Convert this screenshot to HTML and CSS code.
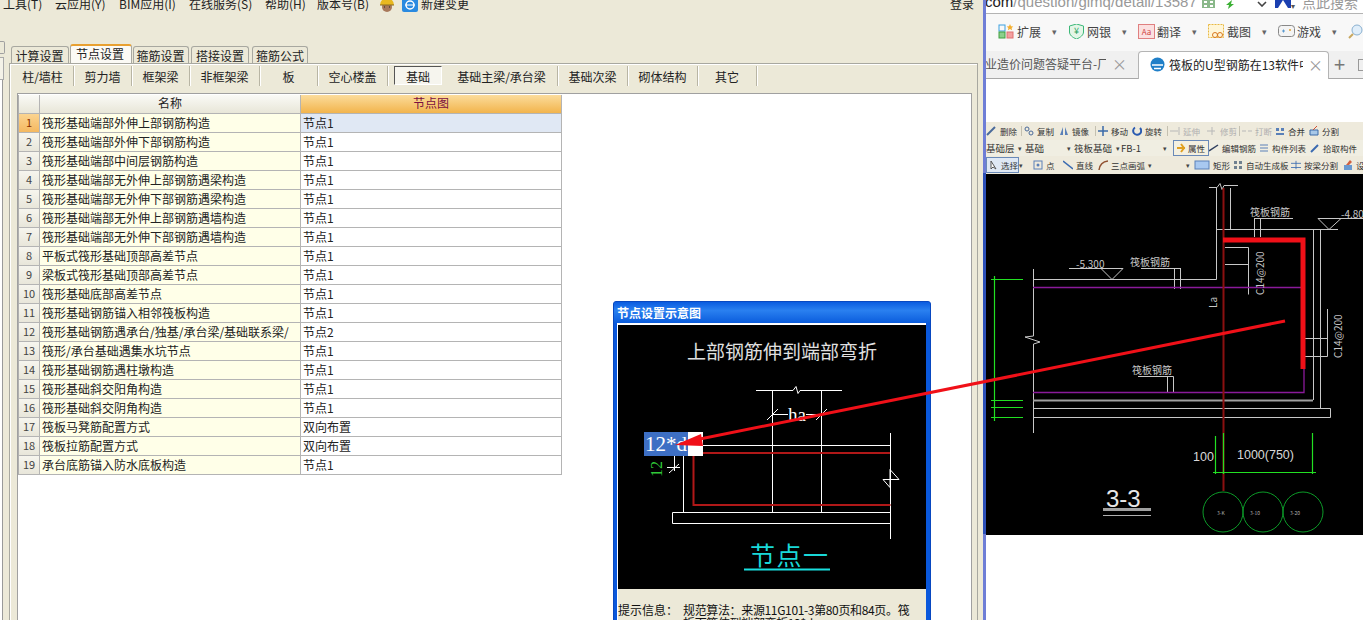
FILE: index.html
```html
<!DOCTYPE html>
<html lang="zh">
<head>
<meta charset="utf-8">
<title>节点设置</title>
<link rel="stylesheet" href="styles.css">
</head>
<body>
<div class="desktop">
  <section class="app">
    <div class="menu">
      <span class="m1">工具(T)</span><span class="m2">云应用(Y)</span><span class="m3">BIM应用(I)</span><span class="m4">在线服务(S)</span><span class="m5">帮助(H)</span><span class="m6">版本号(B)</span>
      <svg class="m-ic" viewBox="0 0 16 14"><circle cx="8" cy="9" r="5" fill="#a8785a"/><path d="M1 7a7 7 0 0 1 14 0z" fill="#e8b820"/><path d="M1 7h14" stroke="#8a6a20"/><path d="M5 9h1M10 9h1" stroke="#222"/></svg>
      <svg class="m-ic m-ic2" viewBox="0 0 16 14"><rect width="16" height="14" rx="2" fill="#2a8ae0"/><circle cx="8" cy="7" r="4" fill="none" stroke="#fff" stroke-width="1.500"/><path d="M3 7h10" stroke="#fff"/></svg>
      <span class="m7">新建变更</span><span class="login">登录</span>
    </div>
    <div class="work">
      <div class="side"><i class="side-a"></i><i class="side-b"></i><i class="side-c"></i></div>
      <div class="main">
        <div class="tabs">
          <span class="tab t1">计算设置</span><span class="tab on">节点设置</span><span class="tab t3">箍筋设置</span><span class="tab t4">搭接设置</span><span class="tab t5">箍筋公式</span>
        </div>
        <div class="panel">
          <div class="subtabs">
            <span>柱/墙柱</span><span>剪力墙</span><span>框架梁</span><span>非框架梁</span><span>板</span><span>空心楼盖</span><span class="sel"><b>基础</b></span><span>基础主梁/承台梁</span><span>基础次梁</span><span>砌体结构</span><span>其它</span>
          </div>
          <div class="content">
            <div class="grid">
              <div class="hd"></div><div class="hd">名称</div><div class="hd hd-on">节点图</div>
              <div class="n n-on">1</div><div class="c">筏形基础端部外伸上部钢筋构造</div><div class="v v-on">节点1</div>
              <div class="n">2</div><div class="c">筏形基础端部外伸下部钢筋构造</div><div class="v">节点1</div>
              <div class="n">3</div><div class="c">筏形基础端部中间层钢筋构造</div><div class="v">节点1</div>
              <div class="n">4</div><div class="c">筏形基础端部无外伸上部钢筋遇梁构造</div><div class="v">节点1</div>
              <div class="n">5</div><div class="c">筏形基础端部无外伸下部钢筋遇梁构造</div><div class="v">节点1</div>
              <div class="n">6</div><div class="c">筏形基础端部无外伸上部钢筋遇墙构造</div><div class="v">节点1</div>
              <div class="n">7</div><div class="c">筏形基础端部无外伸下部钢筋遇墙构造</div><div class="v">节点1</div>
              <div class="n">8</div><div class="c">平板式筏形基础顶部高差节点</div><div class="v">节点1</div>
              <div class="n">9</div><div class="c">梁板式筏形基础顶部高差节点</div><div class="v">节点1</div>
              <div class="n">10</div><div class="c">筏形基础底部高差节点</div><div class="v">节点1</div>
              <div class="n">11</div><div class="c">筏形基础钢筋锚入相邻筏板构造</div><div class="v">节点1</div>
              <div class="n">12</div><div class="c">筏形基础钢筋遇承台/独基/承台梁/基础联系梁/</div><div class="v">节点2</div>
              <div class="n">13</div><div class="c">筏形/承台基础遇集水坑节点</div><div class="v">节点1</div>
              <div class="n">14</div><div class="c">筏形基础钢筋遇柱墩构造</div><div class="v">节点1</div>
              <div class="n">15</div><div class="c">筏形基础斜交阳角构造</div><div class="v">节点1</div>
              <div class="n">16</div><div class="c">筏形基础斜交阴角构造</div><div class="v">节点1</div>
              <div class="n">17</div><div class="c">筏板马凳筋配置方式</div><div class="v">双向布置</div>
              <div class="n">18</div><div class="c">筏板拉筋配置方式</div><div class="v">双向布置</div>
              <div class="n">19</div><div class="c">承台底筋锚入防水底板构造</div><div class="v">节点1</div>
            </div>
          </div>
        </div>
      </div>
    </div>
  </section>

  <div class="strip"></div>

  <section class="browser">
    <div class="addr">
      <span class="url"><b>com</b>/question/gimq/detail/13587</span>
      <svg class="qr" viewBox="0 0 13 8"><path d="M0 0h13v8H0z" fill="#8ab88a"/><path d="M2 1h3v2H2zM8 1h3v2H8zM2 5h3v2H2zM8 5h3v2H8z" fill="#fff"/></svg>
      <svg class="bolt" viewBox="0 0 10 9"><path d="M7 0 1 5h3L3 9l6-5H6z" fill="#3cb034"/></svg>
      <svg class="chev" viewBox="0 0 10 6"><path d="M1 1l4 4 4-4" fill="none" stroke="#444" stroke-width="1.600"/></svg>
      <svg class="box" viewBox="0 0 16 9"><rect width="16" height="9" fill="#1a3fb0"/><path d="M3 9l5-8 5 8z" fill="#fff"/></svg>
      <span class="caret">▾</span>
      <span class="search">点此搜索</span>
    </div>
    <div class="tools">
      <span class="tool"><svg viewBox="0 0 17 15"><rect x="1" y="1" width="6" height="6" fill="none" stroke="#3aa0e0"/><rect x="1" y="8" width="6" height="6" fill="#8ccf8c" stroke="#40a040"/><rect x="9" y="8" width="6" height="6" fill="#f4a0a0" stroke="#e07070"/><path d="M12 0l1 2.200 2.300.3-1.700 1.500.5 2.300-2.100-1.200-2.100 1.200.5-2.300L8.700 2.500 11 2.200z" fill="#f4b030"/></svg><em>扩展</em><u>▾</u></span>
      <span class="tool"><svg viewBox="0 0 17 15"><path d="M8.500 0l7 2v6c0 3-3 5.500-7 7-4-1.500-7-4-7-7V2z" fill="#e4f6e8" stroke="#3cb878"/><text x="8.500" y="10" class="yen">¥</text></svg><em>网银</em><u>▾</u></span>
      <span class="tool"><svg viewBox="0 0 17 15"><rect x=".5" y=".5" width="16" height="14" fill="#fbe0e0" stroke="#e08080"/><text x="8.500" y="11" class="aa">Aa</text></svg><em>翻译</em><u>▾</u></span>
      <span class="tool"><svg viewBox="0 0 17 15"><rect x=".5" y=".5" width="15" height="13" fill="#fff6d8" stroke="#e8b840" stroke-dasharray="2 1"/><circle cx="7" cy="11" r="2.500" fill="none" stroke="#d87820"/><circle cx="12" cy="11" r="2.500" fill="none" stroke="#d87820"/></svg><em>截图</em><u>▾</u></span>
      <span class="tool"><svg viewBox="0 0 17 15"><rect x=".5" y="1.500" width="16" height="11" rx="3" fill="#f4f4f4" stroke="#888"/><path d="M4 7h3M5.500 5.500v3" stroke="#5a9ad0"/><circle cx="12" cy="6" r="1" fill="#e0a030"/></svg><em>游戏</em><u>▾</u></span>
      <span class="tool"><svg viewBox="0 0 17 15"><circle cx="9" cy="6" r="5" fill="#e0eefa" stroke="#8ab0d0"/><path d="M5 10l-4 4" stroke="#c8a860" stroke-width="2"/></svg></span>
    </div>
    <div class="btabs">
      <span class="bt-off">业造价问题答疑平台-厂</span><span class="x x1">×</span>
      <span class="bt-on">
        <svg viewBox="0 0 15 15"><circle cx="7.500" cy="7.500" r="7" fill="#1f7fc8"/><path d="M2 8h11M4 11.500h7" stroke="#fff" stroke-width="1.500"/></svg>
        <em>筏板的U型钢筋在13软件中</em><span class="x">×</span>
      </span>
      <span class="plus">+</span><i class="bt-ic"></i>
    </div>
    <div class="blank"></div>
    <div class="cadbar">
      <div class="rowa">
        <span class="ci"><svg viewBox="0 0 10 10"><path d="M1 9 9 1" stroke="#4a6a9a" stroke-width="2"/></svg>删除</span>
        <span class="ci sep"><svg viewBox="0 0 10 10"><circle cx="3" cy="3" r="2" fill="none" stroke="#4a6a9a"/><circle cx="7" cy="7" r="2" fill="none" stroke="#4a6a9a"/></svg>复制</span>
        <span class="ci"><svg viewBox="0 0 10 10"><path d="M4 1 1 9h3zM6 1l3 8H6z" fill="#5a80b8"/></svg>镜像</span>
        <span class="ci sep"><svg viewBox="0 0 10 10"><path d="M5 0v10M0 5h10" stroke="#3a6aa8" stroke-width="1.500"/></svg>移动</span>
        <span class="ci"><svg viewBox="0 0 10 10"><path d="M8 2a4 4 0 1 1-5-.5" fill="none" stroke="#2a5ab0" stroke-width="2"/></svg>旋转</span>
        <span class="ci dim sep"><svg viewBox="0 0 10 10"><path d="M0 5h8M9 1v8" stroke="#b8b8b8"/></svg>延伸</span>
        <span class="ci dim"><svg viewBox="0 0 10 10"><path d="M0 5h8M5 1v8" stroke="#b8b8b8"/></svg>修剪</span>
        <span class="ci dim sep"><svg viewBox="0 0 10 10"><path d="M0 5h4M6 5h4" stroke="#b8b8b8"/></svg>打断</span>
        <span class="ci"><svg viewBox="0 0 10 10"><path d="M1 2h3v3H1zM6 2h3v3H6zM1 7h8v2H1z" fill="#5a80b8"/></svg>合并</span>
        <span class="ci"><svg viewBox="0 0 10 10"><path d="M1 4h8v5H1z" fill="#a8c8e8" stroke="#3a6aa8"/><path d="M4 4 8 0" stroke="#d05030"/></svg>分割</span>
      </div>
      <div class="rowb">
        <span>基础层</span><u>▾</u><span>基础</span><u>▾</u><span>筏板基础</span><u>▾</u><span>FB-1</span><u>▾</u>
        <span class="cbtn"><svg viewBox="0 0 10 10"><path d="M1 5h8M5 1l3 4-3 4" stroke="#e0a020" stroke-width="2" fill="none"/></svg>属性</span>
        <span class="ci"><svg viewBox="0 0 10 10"><path d="M0 8 9 2" stroke="#304060" stroke-width="1.500"/></svg>编辑钢筋</span>
        <span class="ci"><svg viewBox="0 0 10 10"><path d="M1 2h8M1 5h8M1 8h8" stroke="#5a80b8"/></svg>构件列表</span>
        <span class="ci"><svg viewBox="0 0 10 10"><path d="M1 9 8 2" stroke="#3a6ab0" stroke-width="2"/></svg>拾取构件</span>
      </div>
      <div class="rowc">
        <span class="cbtn cbtn2"><svg viewBox="0 0 10 10"><path d="M2 1v8l2-2 3 2z" fill="#fff" stroke="#555"/></svg>选择</span><u>▾</u>
        <span class="ci"><svg viewBox="0 0 10 10"><rect x="1" y="1" width="8" height="8" fill="none" stroke="#5a80b8"/><circle cx="5" cy="5" r="1.500" fill="#5a80b8"/></svg>点</span>
        <span class="ci"><svg viewBox="0 0 10 10"><path d="M0 1l10 8" stroke="#3a6ab0" stroke-width="1.500"/></svg>直线</span>
        <span class="ci"><svg viewBox="0 0 10 10"><path d="M1 10Q2 2 10 1" fill="none" stroke="#905030" stroke-width="1.500"/></svg>三点画弧</span><u>▾</u><u>▾</u>
        <span class="ci"><svg class="wide" viewBox="0 0 16 10"><rect x="1" y="1" width="14" height="8" fill="#a8c8f0" stroke="#5a80b8"/></svg>矩形</span>
        <span class="ci"><svg viewBox="0 0 10 10"><path d="M1 1h3v3H1zM6 1h3v3H6zM1 6h3v3H1zM6 6h3v3H6z" fill="#708090"/></svg>自动生成板</span>
        <span class="ci"><svg viewBox="0 0 12 10"><path d="M6 0v10M0 3h12M0 8h12" stroke="#3a6ab0"/></svg>按梁分割</span>
        <span class="ci"><svg viewBox="0 0 10 10"><path d="M1 5h8v5H1z" fill="#6a9ad0"/><path d="M3 5l4-5 2 2-3 3" fill="#d06040"/></svg>设</span>
      </div>
    </div>
    <svg class="cad" viewBox="985 173 378 361">
      <rect x="985" y="173" width="378" height="361" fill="#000"/>
      <g fill="none" stroke="#c8c8c8">
        <path d="M1208 186.500h8l3-4 2 6 2-4h14M1215.500 187v91.500H1032.500M1229.500 187v41M1215 228.500h122"/>
        <path d="M1032.500 268V335L1024 336 1039 341 1032.500 343V432M1312.500 228v171M1319.500 228v179"/>
        <path d="M1032 407.500h297.500v9H1032"/>
        <path d="M1068 267.500h54l-11 11-11-11M1140 267.500h39M1173.500 267v21M1179.500 267v21"/>
        <path d="M1253 217.500h39M1253.500 217v19M1259.500 217v19M1317 217.500h46M1317 217.500l11 11 12-11"/>
        <path d="M1224 246.500h23.500v47M1224 263.500h23"/>
        <path d="M1303 337.500h23.500M1303 355.500h23.500V308"/>
        <path d="M1137 375.500h35.500V391M1166.500 375v16"/>
      </g>
      <path d="M1032 399.500h280" stroke="#a0a0a0" stroke-width="2"/>
      <path d="M1032 286.500h270M1032 391.500h271V368" stroke="#8a1a9a" fill="none" stroke-width="1.300"/>
      <path d="M1222.500 187v303" stroke="#8a1010" stroke-width="2"/>
      <path d="M1222 239h80v129" stroke="#f01018" stroke-width="5" fill="none"/>
      <g fill="none" stroke="#22e022" stroke-width="1.200">
        <path d="M993.500 275v145M990 278.500h32M990 399.500h32M990 406.500h32M990 416.500h32"/>
        <path d="M1214.500 435v38M1222.500 432v41M1311.500 432v41M1212 471.500h103"/>
      </g>
      <g fill="none" stroke="#0c9a28">
        <circle cx="1222" cy="511" r="20"/><circle cx="1262" cy="511" r="20"/><circle cx="1302" cy="511" r="20"/>
      </g>
      <g class="cadtx">
        <text x="1075" y="267">-5.300</text>
        <text x="1340" y="217">-4.80</text>
        <text x="1129" y="265">筏板钢筋</text>
        <text x="1249" y="215">筏板钢筋</text>
        <text x="1131" y="373">筏板钢筋</text>
        <text transform="translate(1263 294) rotate(-90)">C14@200</text>
        <text transform="translate(1341 357) rotate(-90)">C14@200</text>
        <text transform="translate(1216 307) rotate(-90)">La</text>
        <text class="cad12" x="1192" y="460">100</text>
        <text class="cad12" x="1236" y="458">1000(750)</text>
        <text class="cad24" x="1105" y="506">3-3</text>
        <text class="cad6" x="1216" y="514">3-K</text>
        <text class="cad6" x="1249" y="514">3-10</text>
        <text class="cad6" x="1289" y="514">3-20</text>
      </g>
      <path d="M1102 508.500h48" stroke="#a0a0a0" stroke-width="3"/>
      <path d="M1102 514.500h48" stroke="#b0b0b0"/>
    </svg>
  </section>

  <aside class="dialog">
    <div class="dlg-title">节点设置示意图</div>
    <div class="dlg-body">
      <svg class="dlg-draw" viewBox="618 324 308 264">
        <rect x="618" y="324" width="308" height="264" fill="#000"/>
        <text class="d-title" x="687" y="358">上部钢筋伸到端部弯折</text>
        <g fill="none" stroke="#fff">
          <path d="M756 389.500h37l3-4 2 7 2-3h42M772.500 389v122M821.500 389v122"/>
          <path d="M772 413.500h16M806 413.500h15M767 419l11-11M816 419l11-11"/>
          <path d="M703 444.500h187M683.500 455v56M672.500 511.500h218v11h-218zM890.500 432v106M883 478.500h16l-9-10v18z"/>
          <path d="M667 466.500h13M674.500 455v15M669 472l10-9"/>
        </g>
        <text class="d-ha" x="788" y="420">ha</text>
        <path d="M693 452h197M693.500 455v49h197" fill="none" stroke="#b01818" stroke-width="2"/>
        <rect x="644" y="431" width="44" height="24" fill="#3d6fc4"/>
        <text class="d-sel" x="645" y="450">12*d</text>
        <rect x="688" y="431" width="15" height="24" fill="#fff"/>
        <text class="d-12" transform="translate(662 476) rotate(-90)">12</text>
        <text class="d-node" x="750" y="564">节点一</text>
        <path d="M744 568.500h86" stroke="#19e0e0" stroke-width="2"/>
      </svg>
      <div class="dlg-info"><span>提示信息：</span><p>规范算法：来源11G101-3第80页和84页。筏<br>折而筋伸到端部弯折12*d</p></div>
    </div>
  </aside>

  <svg class="arrow" viewBox="0 0 1363 620">
    <path d="M1285 321 690 441" stroke="#f01018" stroke-width="3" fill="none"/>
    <path d="M675 445 701 434 703 446z" fill="#f01018"/>
  </svg>
</div>
</body>
</html>
```
FILE: styles.css
```css
* { box-sizing: border-box; }
html, body { margin: 0; height: 620px; overflow: hidden; background: #ece9d8; }
body { font: 12px/14px "Noto Sans CJK SC", "Liberation Sans", sans-serif; color: #222; }
em { font-style: normal; }
.desktop { position: relative; display: flex; width: 1363px; height: 620px; overflow: hidden; }

/* left application */
.app { width: 983px; height: 620px; display: flex; flex-direction: column; background: #ece9d8; overflow: hidden; }
.menu { display: flex; align-items: center; height: 14px; margin-top: -3px; padding-left: 3px; flex: none; }
.menu span { flex: none; }
.m1 { width: 52px; } .m2 { width: 64px; } .m3 { width: 70px; } .m4 { width: 76px; } .m5 { width: 52px; } .m6 { width: 62px; }
.m-ic { width: 16px; height: 14px; margin-top: 2px; }
.m-ic2 { margin-left: 7px; }
.m7 { margin-left: 3px; }
.login { margin-left: auto; margin-right: 9px; }
.work { display: flex; flex: 1; margin-top: 33px; min-height: 0; }
.side { width: 9px; flex: none; display: flex; flex-direction: column; }
.side-a { display: block; width: 5px; height: 13px; margin-top: -3px; border: 1px solid #a0a0a0; border-left: 0; border-radius: 0 2px 2px 0; }
.side-b { display: block; width: 4px; height: 23px; margin-top: 3px; background: #f4f2e8; border: 1px solid #aaa; border-left: 0; }
.side-c { display: block; width: 3px; flex: 1; background: #fff; border-right: 1px solid #999; }
.main { flex: 1; padding-right: 5px; display: flex; flex-direction: column; min-width: 0; }
.tabs { display: flex; align-items: flex-end; height: 19px; padding-left: 2px; flex: none; }
.tab { height: 17px; line-height: 17px; width: 58px; margin-right: 1px; text-align: center; background: #ece9d8; border: 1px solid #a8a8a0; border-bottom: 0; border-radius: 3px 3px 0 0; }
.tab.on { height: 19px; width: 62px; padding-right: 2px; line-height: 16px; background: #fbfaf5; border-top: 2px solid #e8a030; border-bottom: 0; }
.t1 { padding-right: 1px; }
.t3 { width: 56px; margin-right: 2px; padding-right: 1px; } .t4 { margin-right: 3px; } .t5 { width: 56px; }
.panel { flex: 1; display: flex; flex-direction: column; min-height: 0; border: 1px solid #a8a8a0; border-bottom: 0; padding: 0 5px 0 1px; box-shadow: inset 1px 1px 0 #fff; }
.subtabs { display: grid; grid-template-columns: 62px 58px 58px 70px 58px 70px 58px 112px 70px 70px 59px; height: 22px; margin-left: 1px; flex: none; }
.subtabs span { text-align: center; line-height: 21px; border-right: 1px solid #b8b5a4; box-shadow: 1px 0 0 #fff; height: 20px; margin-top: 2px; }
.subtabs .sel { border: 0; box-shadow: none; padding: 0 4px 0 6px; }
.subtabs .sel b { display: block; height: 19px; font-weight: 400; background: #f6f5ee; border: 1px solid; border-color: #555 #fff #fff #555; line-height: 19px; }
.content { flex: 1; margin: 7px 0 0 6px; background: #fff; border: 1px solid #a0a0a0; border-bottom: 0; padding: 1px 0 0; }

.grid { display: grid; grid-template-columns: 21px 261px 261px; grid-auto-rows: 19px; width: 544px; background: #fff; border-left: 1px solid #b0b0b0; }
.grid > div { line-height: 17px; border-right: 1px solid #b4b4b4; border-bottom: 1px solid #b4b4b4; white-space: nowrap; overflow: hidden; padding-left: 2px; color: #222; }
.grid .hd { text-align: center; line-height: 16px; background: linear-gradient(#fafaf6, #e8e6d8); color: #222; padding: 0; }
.grid .hd-on { background: linear-gradient(#fbdc9c, #f2b44c); color: #7a1040; }
.grid .n { background: linear-gradient(#f6f5ee, #e8e6da); text-align: center; padding: 0; color: #444; font-size: 11px; }
.grid .n-on { background: linear-gradient(#fbd490, #f4b860); color: #8a3000; }
.grid .c { background: #ffffe8; }
.grid .v-on { background: #e0e8f4; }

.strip { width: 3px; flex: none; background: linear-gradient(#6f7ed6 0, #6f7ed6 173px, #2d50b8 173px, #2d50b8 534px, #6f7ed6 534px); }

/* right browser */
.browser { flex: 1; min-width: 0; background: #fff; display: flex; flex-direction: column; height: 620px; overflow: hidden; }
.addr { display: flex; align-items: center; height: 14px; flex: none; overflow: hidden; border-bottom: 1px solid #b4b4b4; background: #fff; }
.url { font: 15px/18px "Liberation Sans", sans-serif; color: #999; margin: -10px 0 0 -1px; width: 217px; white-space: nowrap; overflow: hidden; flex: none; height: 18px; }
.url b { font-weight: 400; color: #222; }
.qr { width: 13px; height: 8px; margin-top: -6px; flex: none; }
.bolt { width: 10px; height: 9px; margin: -5px 0 0 10px; flex: none; }
.chev { width: 10px; height: 6px; margin: -5px 0 0 22px; flex: none; }
.box { width: 16px; height: 9px; margin: -6px 0 0 8px; flex: none; }
.caret { font-size: 8px; color: #555; margin-top: -2px; flex: none; }
.search { color: #999; font-size: 14px; margin: -10px 0 0 7px; white-space: nowrap; flex: none; }

.tools { display: grid; grid-template-columns: repeat(6, 70px); height: 37px; flex: none; padding: 0 0 2px 12px; align-items: center; background: #f8f8f8; }
.tool { display: flex; align-items: center; color: #444; }
.tool svg { width: 17px; height: 15px; flex: none; }
.tool em { margin-left: 2px; width: 27px; }
.tool u { text-decoration: none; font-size: 9px; color: #666; margin-left: 8px; }
.yen { font-size: 9px; text-anchor: middle; fill: #2aa060; }
.aa { font-size: 8px; text-anchor: middle; fill: #d04040; }

.btabs { display: flex; align-items: stretch; height: 28px; flex: none; background: #f0f0f0; border-bottom: 1px solid #a8a8a8; color: #555; line-height: 26px; }
.bt-off { width: 121px; white-space: nowrap; overflow: hidden; flex: none; margin-left: -1px; }
.x { color: #999; font-size: 15px; flex: none; }
.x1 { width: 32px; padding-left: 6px; }
.bt-on { display: flex; align-items: center; width: 191px; height: 28px; padding: 0 0 2px 11px; background: #fff; border: 1px solid #b4b4b4; border-bottom: 0; border-radius: 4px 4px 0 0; color: #222; flex: none; }
.bt-on svg { width: 15px; height: 15px; flex: none; }
.bt-on em { margin-left: 4px; width: 134px; white-space: nowrap; overflow: hidden; }
.bt-on .x { margin-left: 5px; }
.plus { font-size: 20px; color: #777; margin-left: 5px; flex: none; }
.bt-ic { display: block; width: 6px; height: 12px; margin: 8px 0 0 13px; border: 1px solid #999; flex: none; }
.blank { height: 43px; flex: none; background: #fff; }

.cadbar { height: 52px; flex: none; background: #eeeadc; font-size: 8.500px; line-height: 12px; color: #333; overflow: hidden; }
.cadbar u { text-decoration: none; font-size: 7px; color: #444; }
.cadbar span { white-space: nowrap; }
.rowb > span { font-size: 9.500px; }
.rowb > .ci, .rowb > .cbtn { font-size: 8.500px; }
.ci { display: flex; align-items: center; gap: 3px; position: relative; }
.ci svg { width: 10px; height: 10px; flex: none; }
.ci svg.wide { width: 16px; }
.rowa .ci:first-child { gap: 4px; }
.sep::before { content: ""; position: absolute; left: -3px; top: 1px; bottom: 1px; border-left: 1px solid #c4c0b0; }
.dim { color: #b0b0b0; }
.rowa { display: grid; grid-template-columns: 38px 35px 39px 34px 38px 37px 35px 33px 34px 41px; height: 18px; align-items: center; }
.rowb { display: grid; grid-template-columns: 32px 7px 42px 7px 42px 5px 42px 10px 36px 50px 51px 50px; height: 16px; align-items: center; background: #f0eee2; }
.rowc { display: grid; grid-template-columns: 33px 14px 30px 35px 50px 38px 8px 39px 58px 52px 20px; height: 18px; align-items: center; }
.cbtn { display: flex; align-items: center; gap: 2px; height: 16px; border: 1px solid #6a8ab8; background: #f4f0e0; padding-left: 2px; }
.cbtn svg { width: 10px; height: 10px; flex: none; }
.cbtn2 { background: #dfe8f4; }
.cad { display: block; width: 378px; height: 361px; flex: none; }
.cadtx text { fill: #c8c8c8; font-size: 10px; }
.cadtx .cad12 { font-size: 12.500px; fill: #d8d8d8; font-family: "Liberation Sans", sans-serif; }
.cadtx .cad24 { font-size: 24px; fill: #e8e8e8; font-family: "Liberation Sans", sans-serif; }
.cadtx .cad6 { font-size: 5px; fill: #b0b0b0; }

/* floating window */
.dialog { position: absolute; left: 613px; top: 301px; width: 318px; height: 322px; display: flex; flex-direction: column; background: #0a58dc; border: 1px solid #0848c0; border-radius: 3px 3px 0 0; overflow: hidden; }
.dlg-title { height: 21px; flex: none; line-height: 22px; padding-left: 3px; color: #fff; font-weight: 700; background: linear-gradient(#0a5ce0, #2a80f0 40%, #0a5cdc); }
.dlg-body { flex: 1; margin: 0 4px 0 3px; background: #ece9d8; border: 1px solid #fff; border-bottom: 0; border-width: 2px 0 0 1px; min-height: 0; overflow: hidden; }
.dlg-draw { display: block; width: 308px; height: 264px; }
.dlg-info { display: flex; margin-top: 14px; line-height: 13px; color: #111; white-space: nowrap; }
.dlg-info span { width: 65px; flex: none; }
.dlg-info p { margin: 0; width: 232px; letter-spacing: -.35px; }
.d-title { font-size: 19px; fill: #e0e0e0; }
.d-ha { font: 19px "Liberation Serif", serif; fill: #fff; }
.d-sel { font: 21px "Liberation Serif", serif; fill: #fff; }
.d-12 { font: 16px "Liberation Serif", serif; fill: #30c838; }
.d-node { font-size: 25px; letter-spacing: 1.500px; fill: #19d8d8; }
.arrow { position: absolute; left: 0; top: 0; width: 1363px; height: 620px; pointer-events: none; }
```
